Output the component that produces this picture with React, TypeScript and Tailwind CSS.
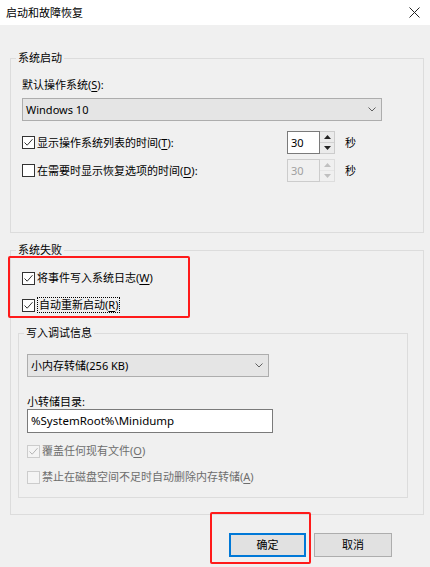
import React from 'react'

const font = { fontFamily: '"Noto Sans", "Noto Sans CJK SC", sans-serif' }

function CheckBox({ checked, disabled }: { checked?: boolean; disabled?: boolean }) {
  return (
    <span
      className={`flex h-[13px] w-[13px] shrink-0 items-center justify-center border ${
        disabled ? 'border-[#cccccc] bg-[#f4f4f4]' : 'border-[#333333] bg-white'
      }`}
    >
      {checked && (
        <svg width="11" height="11" viewBox="0 0 11 11">
          <path d="M1.5 5.5 L4.2 8.2 L9.5 2.2" fill="none" stroke={disabled ? '#b5b5b5' : '#333333'} strokeWidth="1" />
        </svg>
      )}
    </span>
  )
}

function Key({ k }: { k: string }) {
  return <span className="underline underline-offset-2">{k}</span>
}

function Chevron() {
  return (
    <svg width="8" height="5" viewBox="0 0 8 5">
      <path d="M0.5 0.5 L4 4 L7.5 0.5" fill="none" stroke="#606060" strokeWidth="1" />
    </svg>
  )
}

function Select({ value, width }: { value: string; width: string }) {
  return (
    <div className={`flex h-[23px] ${width} items-center justify-between border border-[#adadad] bg-[#e5e5e5] pl-[3px] pr-[5px]`}>
      <span className="leading-[16px]">{value}</span>
      <Chevron />
    </div>
  )
}

function Triangle({ up, color }: { up?: boolean; color: string }) {
  return (
    <svg width="7" height="4" viewBox="0 0 7 4">
      <path d={up ? 'M0 4 L3.5 0 L7 4 Z' : 'M0 0 L3.5 4 L7 0 Z'} fill={color} />
    </svg>
  )
}

function Spin({ value, disabled }: { value: string; disabled?: boolean }) {
  const arrow = disabled ? '#c0c0c0' : '#222222'
  return (
    <div className="flex h-[23px] w-[48px]">
      <div
        className={`flex w-[33px] items-center border pl-[3px] ${
          disabled ? 'border-[#cccccc] bg-[#f0f0f0] text-[#a0a0a0]' : 'border-[#7a7a7a] bg-white text-black'
        }`}
      >
        {value}
      </div>
      <div className={`flex w-[15px] flex-col border border-l-0 ${disabled ? 'border-[#dddddd]' : 'border-[#cccccc]'}`}>
        <div className={`flex flex-1 items-center justify-center border-b ${disabled ? 'border-[#e6e6e6] bg-[#f0f0f0]' : 'border-[#d0d0d0] bg-[#ebebeb]'}`}>
          <Triangle up color={arrow} />
        </div>
        <div className={`flex flex-1 items-center justify-center ${disabled ? 'bg-[#f0f0f0]' : 'bg-[#ebebeb]'}`}>
          <Triangle color={arrow} />
        </div>
      </div>
    </div>
  )
}

export default function App() {
  return (
    <div className="relative h-[567px] w-[430px] overflow-hidden bg-[#f0f0f0] text-[11px] leading-[16px] text-black" style={font}>
      {/* Title bar */}
      <div className="flex h-[25px] items-center justify-between bg-white pl-[6px] pr-[5px]">
        <span>启动和故障恢复</span>
        <svg width="11" height="11" viewBox="0 0 11 11" className="mr-[5px]">
          <path d="M0.5 0.5 L10.5 10.5 M10.5 0.5 L0.5 10.5" stroke="#222222" strokeWidth="1" />
        </svg>
      </div>

      <div className="pl-[10px] pt-[25px]">
        {/* 系统启动 */}
        <fieldset className="w-[414px] border border-[#dcdcdc] pb-[50px] pl-[5px]">
          <legend className="px-[2px]">系统启动</legend>
          <div className="pl-[6px] pt-[11px]">
            <div>
              默认操作系统(<Key k="S" />):
            </div>
            <div className="mt-[5px]">
              <Select value="Windows 10" width="w-[360px]" />
            </div>
            <div className="mt-[10px] flex items-center">
              <div className="flex w-[265px] items-center gap-[2px]">
                <CheckBox checked />
                <span>
                  显示操作系统列表的时间(<Key k="T" />):
                </span>
              </div>
              <Spin value="30" />
              <span className="ml-[10px]">秒</span>
            </div>
            <div className="mt-[5px] flex items-center">
              <div className="flex w-[265px] items-center gap-[2px]">
                <CheckBox />
                <span>
                  在需要时显示恢复选项的时间(<Key k="D" />):
                </span>
              </div>
              <Spin value="30" disabled />
              <span className="ml-[10px]">秒</span>
            </div>
          </div>
        </fieldset>

        {/* 系统失败 */}
        <fieldset className="mt-[9px] w-[414px] border border-[#dcdcdc] pb-[16px] pl-[5px]">
          <legend className="px-[2px]">系统失败</legend>
          <div className="pl-[6px] pt-[12px]">
            <div className="flex items-center gap-[2px]">
              <CheckBox checked />
              <span>
                将事件写入系统日志(<Key k="W" />)
              </span>
            </div>
            <div className="mt-[11px] flex items-center gap-[2px]">
              <CheckBox checked />
              <span className="border border-dotted border-black px-[1px] leading-[14px]">
                自动重新启动(<Key k="R" />)
              </span>
            </div>
          </div>

          {/* 写入调试信息 */}
          <fieldset className="ml-[2px] mt-[12px] w-[390px] border border-[#dcdcdc] pb-[12px] pl-[5px]">
            <legend className="px-[2px]">写入调试信息</legend>
            <div className="pl-[3px] pt-[13px]">
              <Select value="小内存转储(256 KB)" width="w-[242px]" />
              <div className="mt-[17px] leading-[15px]">小转储目录:</div>
              <div className="flex h-[24px] w-[246px] items-center border border-[#7a7a7a] bg-white pl-[3px] text-[11.5px]">
                %SystemRoot%\Minidump
              </div>
              <div className="mt-[10px] flex items-center gap-[2px] text-[#6d6d6d]">
                <CheckBox checked disabled />
                <span>
                  覆盖任何现有文件(<Key k="O" />)
                </span>
              </div>
              <div className="mt-[10px] flex items-center gap-[2px] text-[#6d6d6d]">
                <CheckBox disabled />
                <span>
                  禁止在磁盘空间不足时自动删除内存转储(<Key k="A" />)
                </span>
              </div>
            </div>
          </fieldset>
        </fieldset>
      </div>

      {/* Buttons */}
      <div className="mt-[18px] flex justify-end gap-[8px] pr-[38px]">
        <button className="h-[24px] w-[77px] border-2 border-[#0078d7] bg-[#e1e1e1]">确定</button>
        <button className="h-[24px] w-[78px] border border-[#adadad] bg-[#e1e1e1]">取消</button>
      </div>

      {/* red annotations */}
      <div className="absolute left-[8px] top-[256px] h-[62px] w-[182px] rounded-[2px] border-2 border-[#ff1a1a]" />
      <div className="absolute left-[210px] top-[512px] h-[52px] w-[101px] rounded-[2px] border-2 border-[#ff1a1a]" />
    </div>
  )
}
